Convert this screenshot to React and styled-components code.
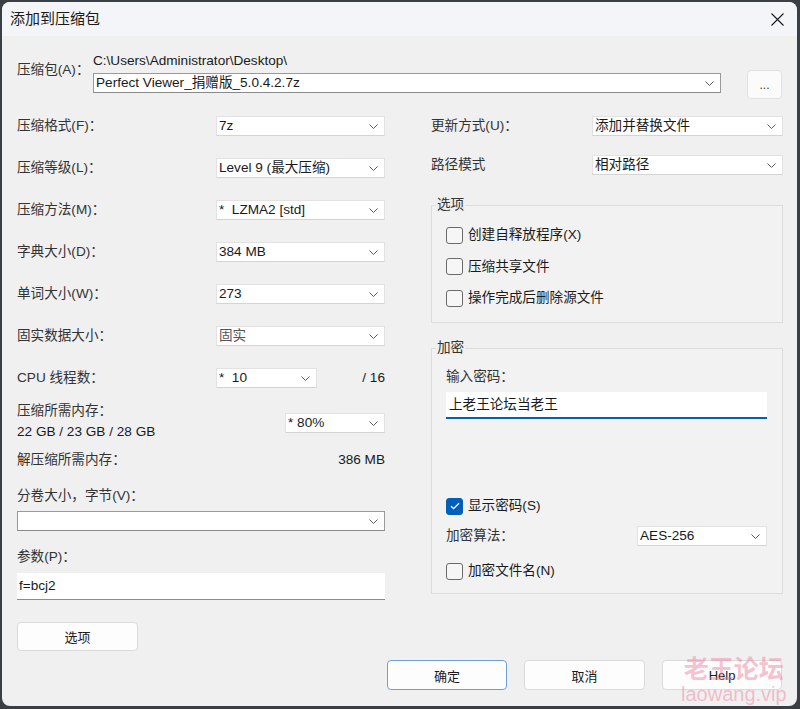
import React from 'react'
import styled, { createGlobalStyle } from 'styled-components'

const GlobalStyle = createGlobalStyle`
html, body {
  margin: 0;
  padding: 0;
  background: #3a3f45;
}
body {
  font-family: "Liberation Sans", "Noto Sans CJK SC", sans-serif;
  font-size: 13.6px;
  color: #1b1b1b;
}
* { box-sizing: border-box; }
`

const Window = styled.div`
position: relative;
margin: 2px;
width: 795px;
height: 704px;
background: #f0f0f0;
border-radius: 8px;
overflow: hidden;
display: flex;
flex-direction: column;
`
const TitleBar = styled.div`
height: 34px;
flex: none;
display: flex;
align-items: center;
justify-content: space-between;
padding: 0 13px 0 8px;
background: #f3f5f8;
`
const Title = styled.div`
font-size: 15px;
line-height: 20px;
color: #1a1a1a;
`
const Body = styled.div`
padding: 0 14px 0 15px;
display: flex;
flex-direction: column;
`
const ArchiveRow = styled.div`
display: flex;
align-items: flex-start;
margin-top: 17px;
`
const Label = styled.div`
line-height: 16px;
color: #333;
white-space: nowrap;
padding-top: ${(props) => props.$top || 0}px;
width: ${(props) => (props.$width ? props.$width + 'px' : 'auto')};
flex: none;
`
const ArchiveMain = styled.div`
width: 628px;
display: flex;
flex-direction: column;
gap: 4px;
`
const PathText = styled.div`
line-height: 16px;
color: #1a1a1a;
`
const ComboBox = styled.div`
width: ${(props) => (props.$width ? props.$width + 'px' : '100%')};
height: ${(props) => props.$height || 20}px;
flex: none;
display: flex;
align-items: center;
justify-content: space-between;
padding: 0 6px 0 2px;
background: #fff;
border: 1px solid ${(props) => (props.$editable ? '#9a9a9a' : '#e2e2e2')};
border-bottom-color: ${(props) => (props.$editable ? '#8a8a8a' : '#d4d4d4')};
color: ${(props) => (props.$muted ? '#555' : '#1a1a1a')};
line-height: 16px;
white-space: pre;
`
const BrowseButton = styled.div`
margin-left: 26px;
margin-top: 17px;
width: 35px;
height: 29px;
background: #fbfbfb;
border: 1px solid #e0e0e0;
border-radius: 4px;
display: flex;
align-items: center;
justify-content: center;
font-size: 12px;
color: #333;
`
const Columns = styled.div`
display: flex;
gap: 46px;
margin-top: 6px;
align-items: flex-start;
`
const LeftColumn = styled.div`
width: 368px;
display: flex;
flex-direction: column;
`
const RightColumn = styled.div`
width: 352px;
display: flex;
flex-direction: column;
`
const FormRow = styled.div`
height: ${(props) => props.$height || 42}px;
margin-top: ${(props) => props.$top || 0}px;
display: flex;
align-items: center;
justify-content: ${(props) => props.$justify || 'space-between'};
`
const Value = styled.div`
line-height: 16px;
color: #1a1a1a;
white-space: nowrap;
margin-left: ${(props) => (props.$push ? 'auto' : '0')};
`
const MemoryBlock = styled.div`
display: flex;
justify-content: space-between;
align-items: flex-start;
padding-top: 4px;
`
const MemoryText = styled.div`
display: flex;
flex-direction: column;
gap: 5px;
`
const MemoryCombo = styled.div`
margin-top: 10px;
`
const Spacer = styled.div`
height: ${(props) => props.$h}px;
flex: none;
`
const TextInput = styled.div`
height: 27px;
background: #fff;
border-bottom: 1px solid #8c8c8c;
padding: 0 2px;
display: flex;
align-items: center;
line-height: 16px;
color: #1a1a1a;
`
const Button = styled.div`
width: ${(props) => props.$width || 120}px;
height: ${(props) => props.$height || 30}px;
flex: none;
background: #fdfdfd;
border: 1px solid ${(props) => (props.$primary ? '#6f9fd6' : '#dadada')};
border-radius: 4px;
display: flex;
align-items: center;
justify-content: center;
font-size: 13px;
color: #1a1a1a;
`
const Group = styled.fieldset`
margin: ${(props) => props.$top}px 0 0 0;
min-width: 0;
border: 1px solid #dcdcdc;
background: #f2f2f2;
padding: ${(props) => props.$padTop}px 15px ${(props) => props.$padBottom}px 14px;
display: flex;
flex-direction: column;
`
const Legend = styled.legend`
padding: 0 1px;
margin-left: -10px;
line-height: 16px;
color: #333;
background: #f0f0f0;
`
const CheckList = styled.div`
display: flex;
flex-direction: column;
gap: 15.5px;
`
const CheckRow = styled.div`
display: flex;
align-items: center;
gap: 5px;
height: 16px;
margin-top: ${(props) => props.$top || 0}px;
line-height: 16px;
color: #1b1b1b;
`
const CheckBox = styled.div`
width: 17px;
height: 17px;
flex: none;
border-radius: 3px;
border: 1px solid ${(props) => (props.$checked ? '#005fb8' : '#6b6b6b')};
background: ${(props) => (props.$checked ? '#005fb8' : '#f6f6f6')};
display: flex;
align-items: center;
justify-content: center;
`
const PasswordInput = styled.div`
height: 27px;
margin-top: 7px;
background: #fff;
border-bottom: 2px solid #005fb8;
padding: 0 3px;
display: flex;
align-items: center;
line-height: 16px;
color: #1a1a1a;
`
const Footer = styled.div`
display: flex;
justify-content: flex-end;
gap: 17px;
margin-top: 9px;
padding-right: 1px;
`
const Watermark = styled.div`
position: absolute;
left: 679px;
top: 649px;
display: flex;
flex-direction: column;
align-items: center;
color: rgba(240, 120, 150, 0.45);
pointer-events: none;
`
const MarkTitle = styled.div`
font-family: "Noto Sans CJK SC", sans-serif;
font-size: 25px;
font-weight: 700;
line-height: 32px;
`
const MarkSite = styled.div`
font-family: "Liberation Sans", sans-serif;
font-size: 20px;
line-height: 22px;
`

const Chevron = () => (
  <svg width="9" height="5" viewBox="0 0 9 5">
    <path d="M0.5 0.5 L4.5 4.5 L8.5 0.5" fill="none" stroke="#5a5a5a" strokeWidth="1" />
  </svg>
)

const Select = ({ value, width, height, editable, muted }) => (
  <ComboBox $width={width} $height={height} $editable={editable} $muted={muted}>
    <span>{value}</span>
    <Chevron />
  </ComboBox>
)

const Check = ({ checked, label, top }) => (
  <CheckRow $top={top}>
    <CheckBox $checked={checked}>
      {checked && (
        <svg width="10" height="8" viewBox="0 0 10 8">
          <path d="M1 4.2 L3.6 6.6 L9 1.2" fill="none" stroke="#fff" strokeWidth="1.3" />
        </svg>
      )}
    </CheckBox>
    <span>{label}</span>
  </CheckRow>
)

const leftRows = [
  ['压缩格式(F)：', '7z'],
  ['压缩等级(L)：', 'Level 9 (最大压缩)'],
  ['压缩方法(M)：', '*  LZMA2 [std]'],
  ['字典大小(D)：', '384 MB'],
  ['单词大小(W)：', '273'],
  ['固实数据大小：', '固实', true],
]

const App = () => {
  return (
    <>
      <GlobalStyle />
      <Window>
        <TitleBar>
          <Title>添加到压缩包</Title>
          <svg width="13" height="13" viewBox="0 0 13 13">
            <path d="M0.5 0.5 L12.5 12.5 M12.5 0.5 L0.5 12.5" stroke="#1a1a1a" strokeWidth="1.1" />
          </svg>
        </TitleBar>
        <Body>
          <ArchiveRow>
            <Label $width={76} $top={9}>压缩包(A)：</Label>
            <ArchiveMain>
              <PathText>C:\Users\Administrator\Desktop\</PathText>
              <Select value="Perfect Viewer_捐赠版_5.0.4.2.7z" editable />
            </ArchiveMain>
            <BrowseButton>...</BrowseButton>
          </ArchiveRow>

          <Columns>
            <LeftColumn>
              {leftRows.map(([label, value, muted]) => (
                <FormRow key={label}>
                  <Label>{label}</Label>
                  <Select value={value} width={169} muted={muted} />
                </FormRow>
              ))}
              <FormRow $justify="flex-start">
                <Label $width={199}>CPU 线程数：</Label>
                <Select value="*  10" width={101} />
                <Value $push>/ 16</Value>
              </FormRow>
              <MemoryBlock>
                <MemoryText>
                  <Label>压缩所需内存：</Label>
                  <Value>22 GB / 23 GB / 28 GB</Value>
                </MemoryText>
                <MemoryCombo>
                  <Select value="* 80%" width={100} />
                </MemoryCombo>
              </MemoryBlock>
              <FormRow $height={16} $top={12}>
                <Label>解压缩所需内存：</Label>
                <Value>386 MB</Value>
              </FormRow>
              <Label $top={20}>分卷大小，字节(V)：</Label>
              <Spacer $h={7} />
              <Select value="" editable />
              <Label $top={18}>参数(P)：</Label>
              <Spacer $h={8} />
              <TextInput>f=bcj2</TextInput>
              <Spacer $h={22} />
              <Button $width={121} $height={29}>选项</Button>
            </LeftColumn>

            <RightColumn>
              <FormRow>
                <Label>更新方式(U)：</Label>
                <Select value="添加并替换文件" width={191} />
              </FormRow>
              <FormRow $height={36}>
                <Label>路径模式</Label>
                <Select value="相对路径" width={191} />
              </FormRow>
              <Group $top={14} $padTop={14} $padBottom={16}>
                <Legend>选项</Legend>
                <CheckList>
                  <Check label="创建自释放程序(X)" />
                  <Check label="压缩共享文件" />
                  <Check label="操作完成后删除源文件" />
                </CheckList>
              </Group>
              <Group $top={17} $padTop={13} $padBottom={14}>
                <Legend>加密</Legend>
                <Label>输入密码：</Label>
                <PasswordInput>上老王论坛当老王</PasswordInput>
                <Check checked label="显示密码(S)" top={79} />
                <FormRow $height={20} $top={12}>
                  <Label>加密算法：</Label>
                  <Select value="AES-256" width={130} />
                </FormRow>
                <Check label="加密文件名(N)" top={17} />
              </Group>
            </RightColumn>
          </Columns>

          <Footer>
            <Button $primary>确定</Button>
            <Button $width={121}>取消</Button>
            <Button>Help</Button>
          </Footer>
        </Body>
        <Watermark>
          <MarkTitle>老王论坛</MarkTitle>
          <MarkSite>laowang.vip</MarkSite>
        </Watermark>
      </Window>
    </>
  )
}

export default App
